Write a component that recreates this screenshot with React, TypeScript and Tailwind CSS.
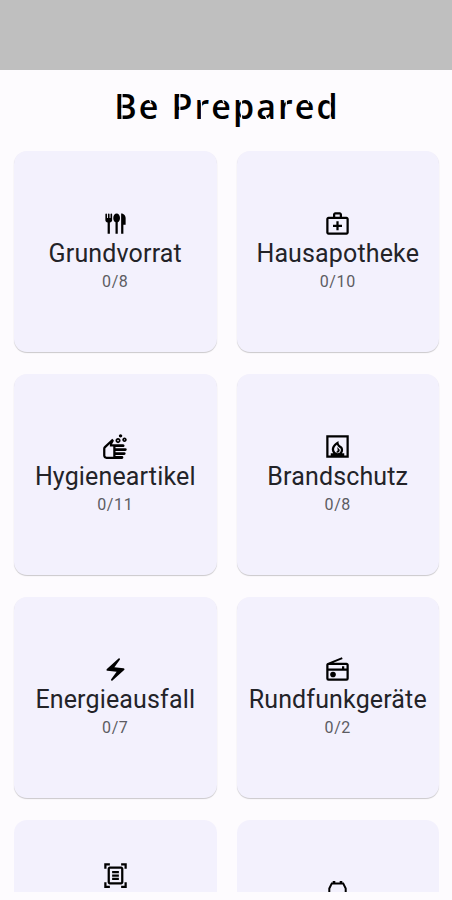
import type { ReactNode } from 'react';
import {
  MdOutlineDocumentScanner,
  MdOutlineElectricBolt,
  MdOutlineFireplace,
  MdOutlineFlatware,
  MdOutlineMedicalServices,
  MdOutlineRadio,
  MdOutlineSoap,
} from 'react-icons/md';

interface Category {
  name: string;
  progress: string;
  icon: ReactNode;
}

function PetIcon() {
  return (
    <svg width="27" height="27" viewBox="0 0 27 27" fill="none" stroke="currentColor" strokeWidth="2">
      <path d="M5.300 24V9.500L7.800 4.400H19.200L21.700 9.500V24z" />
      <path d="M10 5V2M17 5V2" strokeWidth="2.600" />
    </svg>
  );
}

const categories: Category[] = [
  { name: 'Grundvorrat', progress: '0/8', icon: <MdOutlineFlatware size={27} /> },
  { name: 'Hausapotheke', progress: '0/10', icon: <MdOutlineMedicalServices size={27} /> },
  { name: 'Hygieneartikel', progress: '0/11', icon: <MdOutlineSoap size={27} /> },
  { name: 'Brandschutz', progress: '0/8', icon: <MdOutlineFireplace size={27} /> },
  { name: 'Energieausfall', progress: '0/7', icon: <MdOutlineElectricBolt size={27} /> },
  { name: 'Rundfunkgeräte', progress: '0/2', icon: <MdOutlineRadio size={27} /> },
];

function CategoryCard({ category }: { category: Category }) {
  return (
    <div className="flex h-[201px] flex-col items-center rounded-[13px] bg-[#f3f1fd] pt-[59px] text-[#232328] shadow-[0_1px_1px_rgba(0,0,0,0.2)]">
      <div className="h-7 text-black">{category.icon}</div>
      <div className="text-[25px] leading-8 tracking-[0.15px] whitespace-nowrap">{category.name}</div>
      <div className="text-[16px] leading-6 tracking-[0.6px] text-[#5c5c62]">{category.progress}</div>
    </div>
  );
}

// stencil breaks cut into the letters of the title
function StencilCuts() {
  return (
    <svg className="absolute inset-0" width="452" height="81" fill="none" stroke="#fdfbfe" strokeWidth="1.2">
      <path d="M122 20v32M179.800 20v32M201.500 27v25M241.500 27v25M286.300 27v25M330.200 27v25" />
      <path d="M149 28l2 5M222 28l2 5M307 28l2 5M265 45l3 6" />
    </svg>
  );
}

export default function App() {
  return (
    <div className="flex h-[900px] w-[452px] flex-col overflow-hidden bg-[#fdfbfe] font-['Roboto',sans-serif]">
      <div className="h-[70px] shrink-0 bg-[#bfbfbf]" />
      <header className="relative h-[81px] shrink-0 pt-[15px] pl-0.5 text-center">
        <h1 className="font-['Open_Sans',sans-serif] text-[34px] leading-[42px] font-semibold tracking-[2.1px] text-black">
          Be Prepared
        </h1>
        <StencilCuts />
      </header>
      <div className="h-[741px] shrink-0 overflow-hidden pr-[13px] pl-[14px]">
        <div className="grid grid-cols-2 gap-x-5 gap-y-[22px]">
          {categories.map((category) => (
            <CategoryCard key={category.name} category={category} />
          ))}
          <div className="flex h-[201px] justify-center rounded-[13px] bg-[#f3f1fd] pt-[42px] text-black">
            <MdOutlineDocumentScanner size={27} />
          </div>
          <div className="flex h-[201px] justify-center rounded-[13px] bg-[#f3f1fd] pt-[59px] text-black">
            <PetIcon />
          </div>
        </div>
      </div>
    </div>
  );
}
